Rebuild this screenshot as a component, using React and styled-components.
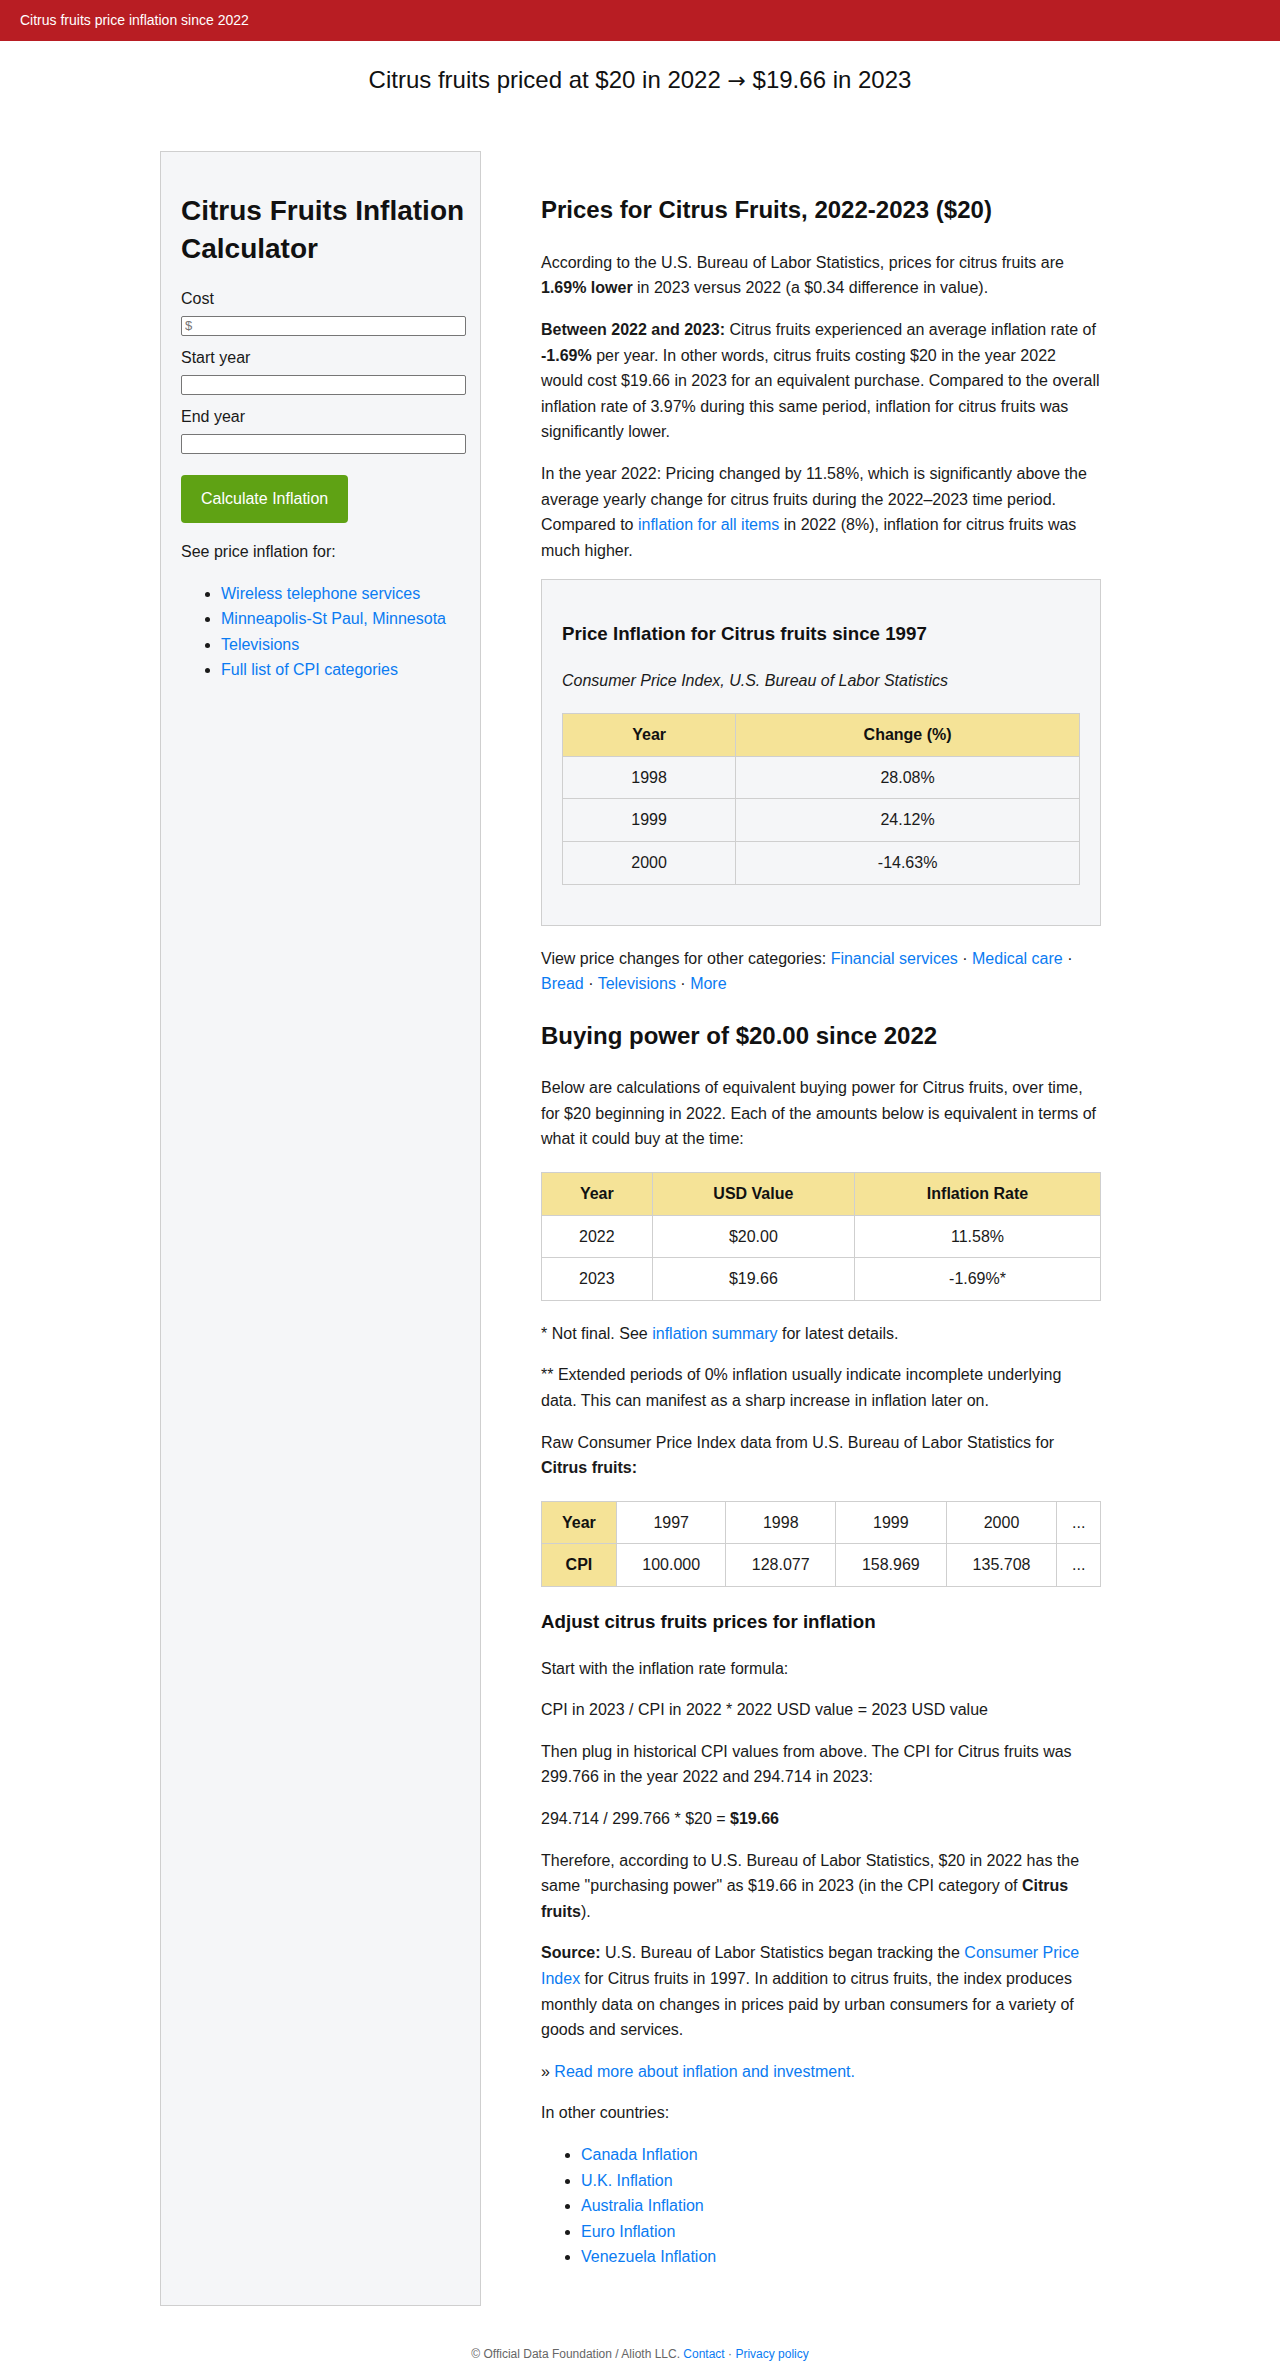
import React from "react"
import styled, { createGlobalStyle } from "styled-components"

const GlobalStyle = createGlobalStyle`
  body {
    margin: 0;
    font-family: "Liberation Sans", Arial, Helvetica, sans-serif;
    font-size: 16px;
    line-height: 1.6;
    color: #1a1a1a;
    background: #fff;
  }
  a {
    color: #0a7bf2;
    text-decoration: none;
  }
`

const TopBar = styled.header`
  height: 41px;
  background: #b81d23;
  color: #fff;
  font-size: 14px;
  display: flex;
  align-items: center;
  padding: 0 20px;
`

const PageTitle = styled.h1`
  font-size: 24px;
  font-weight: normal;
  text-align: center;
  margin: 20px 0 52px;
  line-height: 1.6;
  color: #111;
`

const Arrow = styled.span`
  font-family: "DejaVu Sans", sans-serif;
  font-size: 22px;
`

const Layout = styled.div`
  width: 960px;
  margin: 0 auto;
  display: grid;
  grid-template-columns: 321px 1fr;
`

const Sidebar = styled.aside`
  background: #f5f6f8;
  border: 1px solid #cfcfcf;
  padding: 20px 14px 20px 20px;
`

const SideHeading = styled.h2`
  font-size: 28px;
  line-height: 38px;
  margin: 20px 0 18px;
  color: #111;
`

const Label = styled.label`
  display: block;
`

const Input = styled.input`
  display: block;
  box-sizing: border-box;
  width: 100%;
  height: 20px;
  margin: 4px 0 9.4px;
  padding: 1px 3px;
  border: 1px solid #767676;
  border-radius: 2px;
  background: #fff;
  font-family: "Liberation Sans", Arial, sans-serif;
  font-size: 13px;
  color: #777;
`

const Button = styled.button`
  margin-top: 12px;
  padding: 11px 20px;
  background: #5fa214;
  color: #fff;
  border: 0;
  border-radius: 4px;
  font-family: "Liberation Sans", Arial, sans-serif;
  font-size: 16px;
  line-height: 1.6;
`

const Main = styled.main`
  padding: 20px 19px 20px 60px;
`

const Heading = styled.h2`
  font-size: 24px;
  line-height: 1.6;
  margin: 20px 0;
  color: #111;
`

const SubHeading = styled.h3`
  font-size: 18.72px;
  line-height: 1.6;
  margin: 18.72px 0;
  color: #111;
`

const Para = styled.p`
  margin: 16px 0;
  font-style: ${p => (p.$italic ? "italic" : "normal")};
`

const List = styled.ul`
  margin: 16px 0;
  padding-left: 40px;
`

const Panel = styled.section`
  background: #f5f6f8;
  border: 1px solid #cfcfcf;
  padding: 20px;
  margin: 16px 0 20px;
`

const Table = styled.table`
  width: 100%;
  border-collapse: collapse;
  margin: 20px 0;
  background: ${p => (p.$plain ? "transparent" : "#fff")};
`

const Col = styled.col`
  width: ${p => p.$w};
`

const Th = styled.th`
  background: #f5e397;
  border: 1px solid #cfcfcf;
  padding: 8px;
  text-align: center;
  font-weight: bold;
  color: #111;
`

const Td = styled.td`
  border: 1px solid #cfcfcf;
  padding: 8px;
  text-align: center;
`

const Footer = styled.footer`
  text-align: center;
  font-size: 12px;
  color: #666;
  padding: 39px 0 12px;
`

const sideLinks = [
  "Wireless telephone services",
  "Minneapolis-St Paul, Minnesota",
  "Televisions",
  "Full list of CPI categories",
]

const historic = [
  ["1998", "28.08%"],
  ["1999", "24.12%"],
  ["2000", "-14.63%"],
]

const buying = [
  ["2022", "$20.00", "11.58%"],
  ["2023", "$19.66", "-1.69%*"],
]

const countries = ["Canada Inflation", "U.K. Inflation", "Australia Inflation", "Euro Inflation", "Venezuela Inflation"]

const App = () => (
  <>
    <GlobalStyle />
    <TopBar>Citrus fruits price inflation since 2022</TopBar>
    <PageTitle>
      Citrus fruits priced at $20 in 2022 <Arrow>→</Arrow> $19.66 in 2023
    </PageTitle>
    <Layout>
      <Sidebar>
        <SideHeading>Citrus Fruits Inflation Calculator</SideHeading>
        <form onSubmit={e => e.preventDefault()}>
          <Label htmlFor="cost">Cost</Label>
          <Input id="cost" placeholder="$" />
          <Label htmlFor="start">Start year</Label>
          <Input id="start" />
          <Label htmlFor="end">End year</Label>
          <Input id="end" />
          <Button type="submit">Calculate Inflation</Button>
        </form>
        <Para>See price inflation for:</Para>
        <List>
          {sideLinks.map(l => (
            <li key={l}>
              <a href="#">{l}</a>
            </li>
          ))}
        </List>
      </Sidebar>
      <Main>
        <Heading>Prices for Citrus Fruits, 2022-2023 ($20)</Heading>
        <Para>
          According to the U.S. Bureau of Labor Statistics, prices for citrus fruits are <strong>1.69% lower</strong> in
          2023 versus 2022 (a $0.34 difference in value).
        </Para>
        <Para>
          <strong>Between 2022 and 2023:</strong> Citrus fruits experienced an average inflation rate of{" "}
          <strong>-1.69%</strong> per year. In other words, citrus fruits costing $20 in the year 2022 would cost $19.66 in
          2023 for an equivalent purchase. Compared to the overall inflation rate of 3.97% during this same period,
          inflation for citrus fruits was significantly lower.
        </Para>
        <Para>
          In the year 2022: Pricing changed by 11.58%, which is significantly above the average yearly change for citrus
          fruits during the 2022–2023 time period. Compared to <a href="#">inflation for all items</a> in 2022 (8%),
          inflation for citrus fruits was much higher.
        </Para>
        <Panel>
          <SubHeading>Price Inflation for Citrus fruits since 1997</SubHeading>
          <Para $italic>Consumer Price Index, U.S. Bureau of Labor Statistics</Para>
          <Table $plain>
            <colgroup>
              <Col $w="33.5%" />
              <Col $w="66.5%" />
            </colgroup>
            <thead>
              <tr>
                <Th>Year</Th>
                <Th>Change (%)</Th>
              </tr>
            </thead>
            <tbody>
              {historic.map(([y, c]) => (
                <tr key={y}>
                  <Td>{y}</Td>
                  <Td>{c}</Td>
                </tr>
              ))}
            </tbody>
          </Table>
        </Panel>
        <Para>
          View price changes for other categories: <a href="#">Financial services</a> · <a href="#">Medical care</a> ·{" "}
          <a href="#">Bread</a> · <a href="#">Televisions</a> · <a href="#">More</a>
        </Para>
        <Heading>Buying power of $20.00 since 2022</Heading>
        <Para>
          Below are calculations of equivalent buying power for Citrus fruits, over time, for $20 beginning in 2022. Each
          of the amounts below is equivalent in terms of what it could buy at the time:
        </Para>
        <Table>
          <colgroup>
            <Col $w="19.8%" />
            <Col $w="36.2%" />
            <Col $w="44%" />
          </colgroup>
          <thead>
            <tr>
              <Th>Year</Th>
              <Th>USD Value</Th>
              <Th>Inflation Rate</Th>
            </tr>
          </thead>
          <tbody>
            {buying.map(([y, v, r]) => (
              <tr key={y}>
                <Td>{y}</Td>
                <Td>{v}</Td>
                <Td>{r}</Td>
              </tr>
            ))}
          </tbody>
        </Table>
        <Para>
          * Not final. See <a href="#">inflation summary</a> for latest details.
        </Para>
        <Para>
          ** Extended periods of 0% inflation usually indicate incomplete underlying data. This can manifest as a sharp
          increase in inflation later on.
        </Para>
        <Para>
          Raw Consumer Price Index data from U.S. Bureau of Labor Statistics for <strong>Citrus fruits:</strong>
        </Para>
        <Table>
          <colgroup>
            <Col $w="13.4%" />
            <Col $w="19.6%" />
            <Col $w="19.6%" />
            <Col $w="19.8%" />
            <Col $w="19.8%" />
            <Col $w="7.8%" />
          </colgroup>
          <tbody>
            <tr>
              <Th>Year</Th>
              <Td>1997</Td>
              <Td>1998</Td>
              <Td>1999</Td>
              <Td>2000</Td>
              <Td>...</Td>
            </tr>
            <tr>
              <Th>CPI</Th>
              <Td>100.000</Td>
              <Td>128.077</Td>
              <Td>158.969</Td>
              <Td>135.708</Td>
              <Td>...</Td>
            </tr>
          </tbody>
        </Table>
        <SubHeading>Adjust citrus fruits prices for inflation</SubHeading>
        <Para>Start with the inflation rate formula:</Para>
        <Para>CPI in 2023 / CPI in 2022 * 2022 USD value = 2023 USD value</Para>
        <Para>
          Then plug in historical CPI values from above. The CPI for Citrus fruits was 299.766 in the year 2022 and
          294.714 in 2023:
        </Para>
        <Para>
          294.714 / 299.766 * $20 = <strong>$19.66</strong>
        </Para>
        <Para>
          Therefore, according to U.S. Bureau of Labor Statistics, $20 in 2022 has the same "purchasing power" as $19.66
          in 2023 (in the CPI category of <strong>Citrus fruits</strong>).
        </Para>
        <Para>
          <strong>Source:</strong> U.S. Bureau of Labor Statistics began tracking the{" "}
          <a href="#">Consumer Price Index</a> for Citrus fruits in 1997. In addition to citrus fruits, the index produces
          monthly data on changes in prices paid by urban consumers for a variety of goods and services.
        </Para>
        <Para>
          » <a href="#">Read more about inflation and investment.</a>
        </Para>
        <Para>In other countries:</Para>
        <List>
          {countries.map(c => (
            <li key={c}>
              <a href="#">{c}</a>
            </li>
          ))}
        </List>
      </Main>
    </Layout>
    <Footer>
      © Official Data Foundation / Alioth LLC. <a href="#">Contact</a> · <a href="#">Privacy policy</a>
    </Footer>
  </>
)

export default App
